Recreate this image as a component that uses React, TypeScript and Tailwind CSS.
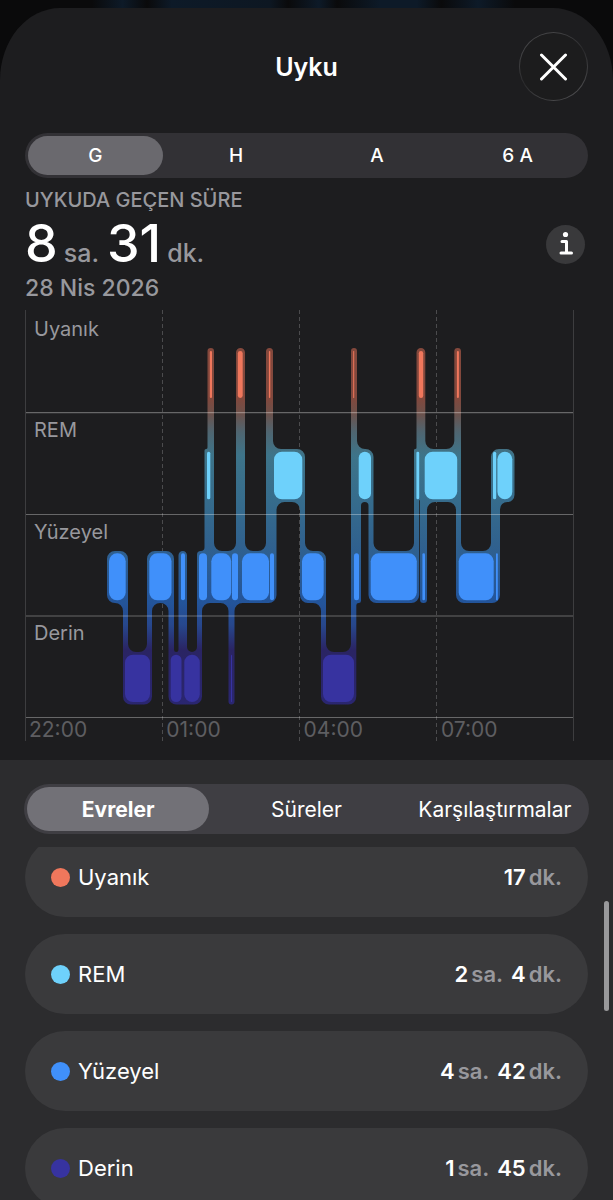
const GRADIENT = [
  [348, '#84483c'],
  [398, '#82483d'],
  [412, '#6e5049'],
  [432, '#4f6570'],
  [455, '#3e7489'],
  [500, '#366c8c'],
  [545, '#30618e'],
  [603, '#23549a'],
  [625, '#27478c'],
  [650, '#2a2463'],
  [705, '#2a2670'],
] as const;

type Point = [number, number];

const OUTLINE: Point[] = [
  [107, 551], [128, 551], [128, 652], [147, 652], [147, 551], [174, 551], [174, 652],
  [178.5, 652], [178.5, 551], [187, 551], [187, 652], [197, 652], [197, 551], [204.5, 551],
  [204.5, 449], [207.5, 449], [207.5, 348], [214, 348], [214, 551], [236, 551], [236, 348],
  [245, 348], [245, 551], [266, 551], [266, 348], [273, 348], [273, 449], [305, 449],
  [305, 551], [326, 551], [326, 652], [351, 652], [351, 348], [357, 348], [357, 449],
  [373.5, 449], [373.5, 551], [414, 551], [414, 449], [416.5, 449], [416.5, 348], [425.3, 348],
  [425.3, 449], [454.3, 449], [454.3, 348], [461, 348], [461, 551], [491, 551], [491, 449],
  [514.5, 449], [514.5, 502], [500, 502], [500, 603], [456, 603], [456, 502], [427, 502],
  [427, 603], [420, 603], [420, 500], [419.2, 500], [419.2, 603], [368.5, 603], [368.5, 502],
  [361, 502], [361, 603], [356.3, 603], [356.3, 704.5], [321, 704.5], [321, 603], [300, 603],
  [300, 502], [276.5, 502], [276.5, 603], [234.5, 603], [234.5, 704.5], [228.5, 704.5],
  [228.5, 603], [202, 603], [202, 704.5], [168.5, 704.5], [168.5, 603], [152, 603],
  [152, 704.5], [123, 704.5], [123, 603], [107, 603],
];

function roundedPath(points: Point[], radius: number): string {
  const n = points.length;
  const parts = points.map((p, i) => {
    const a = points[(i + n - 1) % n];
    const b = points[(i + 1) % n];
    const la = Math.hypot(a[0] - p[0], a[1] - p[1]);
    const lb = Math.hypot(b[0] - p[0], b[1] - p[1]);
    const r = Math.min(radius, la / 2, lb / 2);
    const s = [p[0] + ((a[0] - p[0]) * r) / la, p[1] + ((a[1] - p[1]) * r) / la];
    const e = [p[0] + ((b[0] - p[0]) * r) / lb, p[1] + ((b[1] - p[1]) * r) / lb];
    const cross = (p[0] - a[0]) * (b[1] - p[1]) - (p[1] - a[1]) * (b[0] - p[0]);
    return `${i === 0 ? 'M' : 'L'}${s[0]} ${s[1]}A${r} ${r} 0 0 ${cross > 0 ? 1 : 0} ${e[0]} ${e[1]}`;
  });
  return parts.join('') + 'Z';
}

const STAGES = [
  {
    name: 'Uyanık', y: 351, h: 47, color: '#f0775c', label: 336,
    spans: [[209.8, 212], [237.8, 242.7], [268.9, 270.3], [353.2, 354.2], [418.8, 423.2], [456.9, 458.9]],
  },
  {
    name: 'REM', y: 451.7, h: 47.6, color: '#6ed1fb', label: 437,
    spans: [[207, 210.3], [274, 302.3], [358.7, 371], [416.4, 419.2], [424.7, 457.2], [493, 496.2], [497.4, 512.3]],
  },
  {
    name: 'Yüzeyel', y: 553.3, h: 47, color: '#4090fa', label: 539,
    spans: [[109, 125.7], [149.3, 171.5], [181, 185], [199, 207], [211.3, 231.2], [232, 238], [242, 269], [270, 274], [302, 323.7], [354, 359], [370.7, 416.8], [422.4, 425], [458.7, 493.7], [496, 497.8]],
  },
  {
    name: 'Derin', y: 654.7, h: 47.3, color: '#3733a0', label: 640,
    spans: [[125, 150], [170.7, 181.5], [184.3, 199.8], [231, 232], [323, 354]],
  },
];

function SleepChart() {
  return (
    <svg viewBox="24 310 551 432" className="block w-full" role="img" aria-label="Uyku evreleri">
      <defs>
        <linearGradient id="stage" gradientUnits="userSpaceOnUse" x1="0" x2="0" y1="348" y2="705">
          {GRADIENT.map(([y, color]) => (
            <stop key={y} offset={(y - 348) / 357} stopColor={color} />
          ))}
        </linearGradient>
      </defs>
      {[162.5, 299.5, 436.5].map((x) => (
        <line key={x} x1={x} x2={x} y1="310" y2="741" stroke="#4b4b4d" strokeWidth="1" strokeDasharray="4 3" />
      ))}
      <path d={roundedPath(OUTLINE, 8)} fill="url(#stage)" />
      {STAGES.map((s) => (
        <g key={s.name} fill={s.color}>
          {s.spans.map(([a, b]) => (
            <rect key={a} x={a} y={s.y} width={b - a} height={s.h} rx={Math.min(8, (b - a) / 2)} />
          ))}
        </g>
      ))}
      {[412.7, 514.5, 616, 717.5].map((y) => (
        <line key={y} x1="25" x2="574" y1={y} y2={y} stroke="#ffffff" strokeOpacity="0.33" strokeWidth="1.2" />
      ))}
      <path d="M25.5 310V741M573.5 310V741" stroke="#3d3d3f" strokeWidth="1" />
      <g className="font-['Inter',sans-serif]" fontSize="20">
        {STAGES.map((s) => (
          <text key={s.name} x="34" y={s.label} fill="#98989d">{s.name}</text>
        ))}
        {['22:00', '01:00', '04:00', '07:00'].map((t, i) => (
          <text key={t} x={29 + i * 137.3} y="737" fill="#5e5e61" fontSize="21">{t}</text>
        ))}
      </g>
    </svg>
  );
}

const ROWS = [
  { name: 'Uyanık', dot: 'bg-[#f0775c]', parts: [['17', 'dk.']] },
  { name: 'REM', dot: 'bg-[#6ed1fb]', parts: [['2', 'sa.'], ['4', 'dk.']] },
  { name: 'Yüzeyel', dot: 'bg-[#4090fa]', parts: [['4', 'sa.'], ['42', 'dk.']] },
  { name: 'Derin', dot: 'bg-[#3733a0]', parts: [['1', 'sa.'], ['45', 'dk.']] },
];

export default function App() {
  return (
    <div className="flex h-screen flex-col overflow-hidden bg-[#0a0a0b] bg-[linear-gradient(90deg,transparent_15%,#0d1a28_20%,#0a0a0b_24%,#0d1a28_28%,#0d1722_44%,#0a0a0b_47%,#0d1a28_52%,#0a0a0b_55%,#0d1a28_62%,#0d1a28_68%,#0a0a0b_72%,#0d1a28_78%,transparent_84%)] bg-[length:100%_8px] bg-no-repeat pt-2 font-['Inter',sans-serif] text-white">
      <main className="flex min-h-0 flex-1 flex-col overflow-hidden bg-[#1d1d1f] [border-radius:60px_60px_0_0/72px_72px_0_0]">
        <header className="grid grid-cols-[1fr_auto_1fr] items-center px-[25px] pt-6">
          <span />
          <h1 className="text-[25px] leading-8 font-semibold">Uyku</h1>
          <button type="button" aria-label="Kapat" className="flex size-[69px] items-center justify-center justify-self-end rounded-full bg-[linear-gradient(150deg,#4c4c4e,#3a3a3c_35%,#2a2a2c_50%,#3a3a3c_65%,#545456)] p-px">
            <span className="flex size-full items-center justify-center rounded-full bg-[#1c1c1d]">
              <svg viewBox="0 0 28 28" className="size-7" fill="none" stroke="#fff" strokeWidth="3" strokeLinecap="round">
                <path d="M1.5 2L25.5 26M25.5 2L1.5 26" />
              </svg>
            </span>
          </button>
        </header>

        <div role="tablist" aria-label="Aralık" className="mx-[25px] mt-8 grid h-[45px] grid-cols-4 rounded-full bg-[#323135]">
          {['G', 'H', 'A', '6 A'].map((t, i) => (
            <button key={t} type="button" role="tab" aria-selected={i === 0} className="m-[3px] rounded-full pt-0.5 text-[19px] font-medium aria-selected:bg-[#6a696e]">
              {t}
            </button>
          ))}
        </div>

        <section className="mx-[25px] mt-2">
          <h2 className="text-[20px] leading-7 font-medium text-[#98989d]">UYKUDA GEÇEN SÜRE</h2>
          <div className="flex items-center justify-between">
            <p className="flex h-[60px] items-baseline gap-2 text-[25px] leading-8 font-medium text-[#98989d]">
              <span className="flex items-baseline gap-1.5">
                <span className="text-[52px] leading-[60px] text-white">8</span>sa.
              </span>
              <span className="flex items-baseline gap-1.5">
                <span className="text-[52px] leading-[60px] text-white">31</span>dk.
              </span>
            </p>
            <button type="button" aria-label="Bilgi" className="mr-[3px] flex size-[39px] items-center justify-center rounded-full bg-[#39393b]">
              <svg viewBox="0 0 16 26" className="h-[26px] w-4" fill="none" stroke="#fff" strokeWidth="3" strokeLinecap="round" strokeLinejoin="round">
                <circle cx="7.5" cy="3.5" r="2.6" fill="#fff" stroke="none" />
                <path d="M4 10.5H8.5V22M3 22H13.5" />
              </svg>
            </button>
          </div>
          <p className="text-[23px] leading-7 font-medium text-[#98989d]">28 Nis 2026</p>
        </section>

        <div className="mt-2 mr-[38px] ml-6">
          <SleepChart />
        </div>

        <section className="relative mt-[18px] flex min-h-0 flex-1 flex-col bg-[#2c2c2e] px-[25px] pt-6">
          <div role="tablist" aria-label="Görünüm" className="-mx-px grid h-[50px] shrink-0 grid-cols-3 rounded-full bg-[#3f3e43]">
            {['Evreler', 'Süreler', 'Karşılaştırmalar'].map((t, i) => (
              <button key={t} type="button" role="tab" aria-selected={i === 0} className="m-[3px] rounded-full pt-0.5 text-[21px] aria-selected:bg-[#727177] aria-selected:font-bold">
                {t}
              </button>
            ))}
          </div>
          <div className="mt-[13px] min-h-0 flex-1 overflow-hidden">
            <ul className="-mt-[10px] flex flex-col gap-[17px]">
              {ROWS.map((r) => (
                <li key={r.name} className="flex h-20 shrink-0 items-center rounded-full bg-[#3a3a3c] pr-[26px] pl-[26px] text-[22px]">
                  <span className={`mr-2 size-[19px] rounded-full ${r.dot}`} />
                  <span>{r.name}</span>
                  <span className="ml-auto flex gap-2 font-semibold">
                    {r.parts.map(([n, u]) => (
                      <span key={u} className="flex gap-[3px]">
                        {n}
                        <span className="text-[#98989d]">{u}</span>
                      </span>
                    ))}
                  </span>
                </li>
              ))}
            </ul>
          </div>
          <div className="absolute top-[141px] right-1 h-[110px] w-[5px] rounded-full bg-[#99999b]" />
        </section>
      </main>
    </div>
  );
}
